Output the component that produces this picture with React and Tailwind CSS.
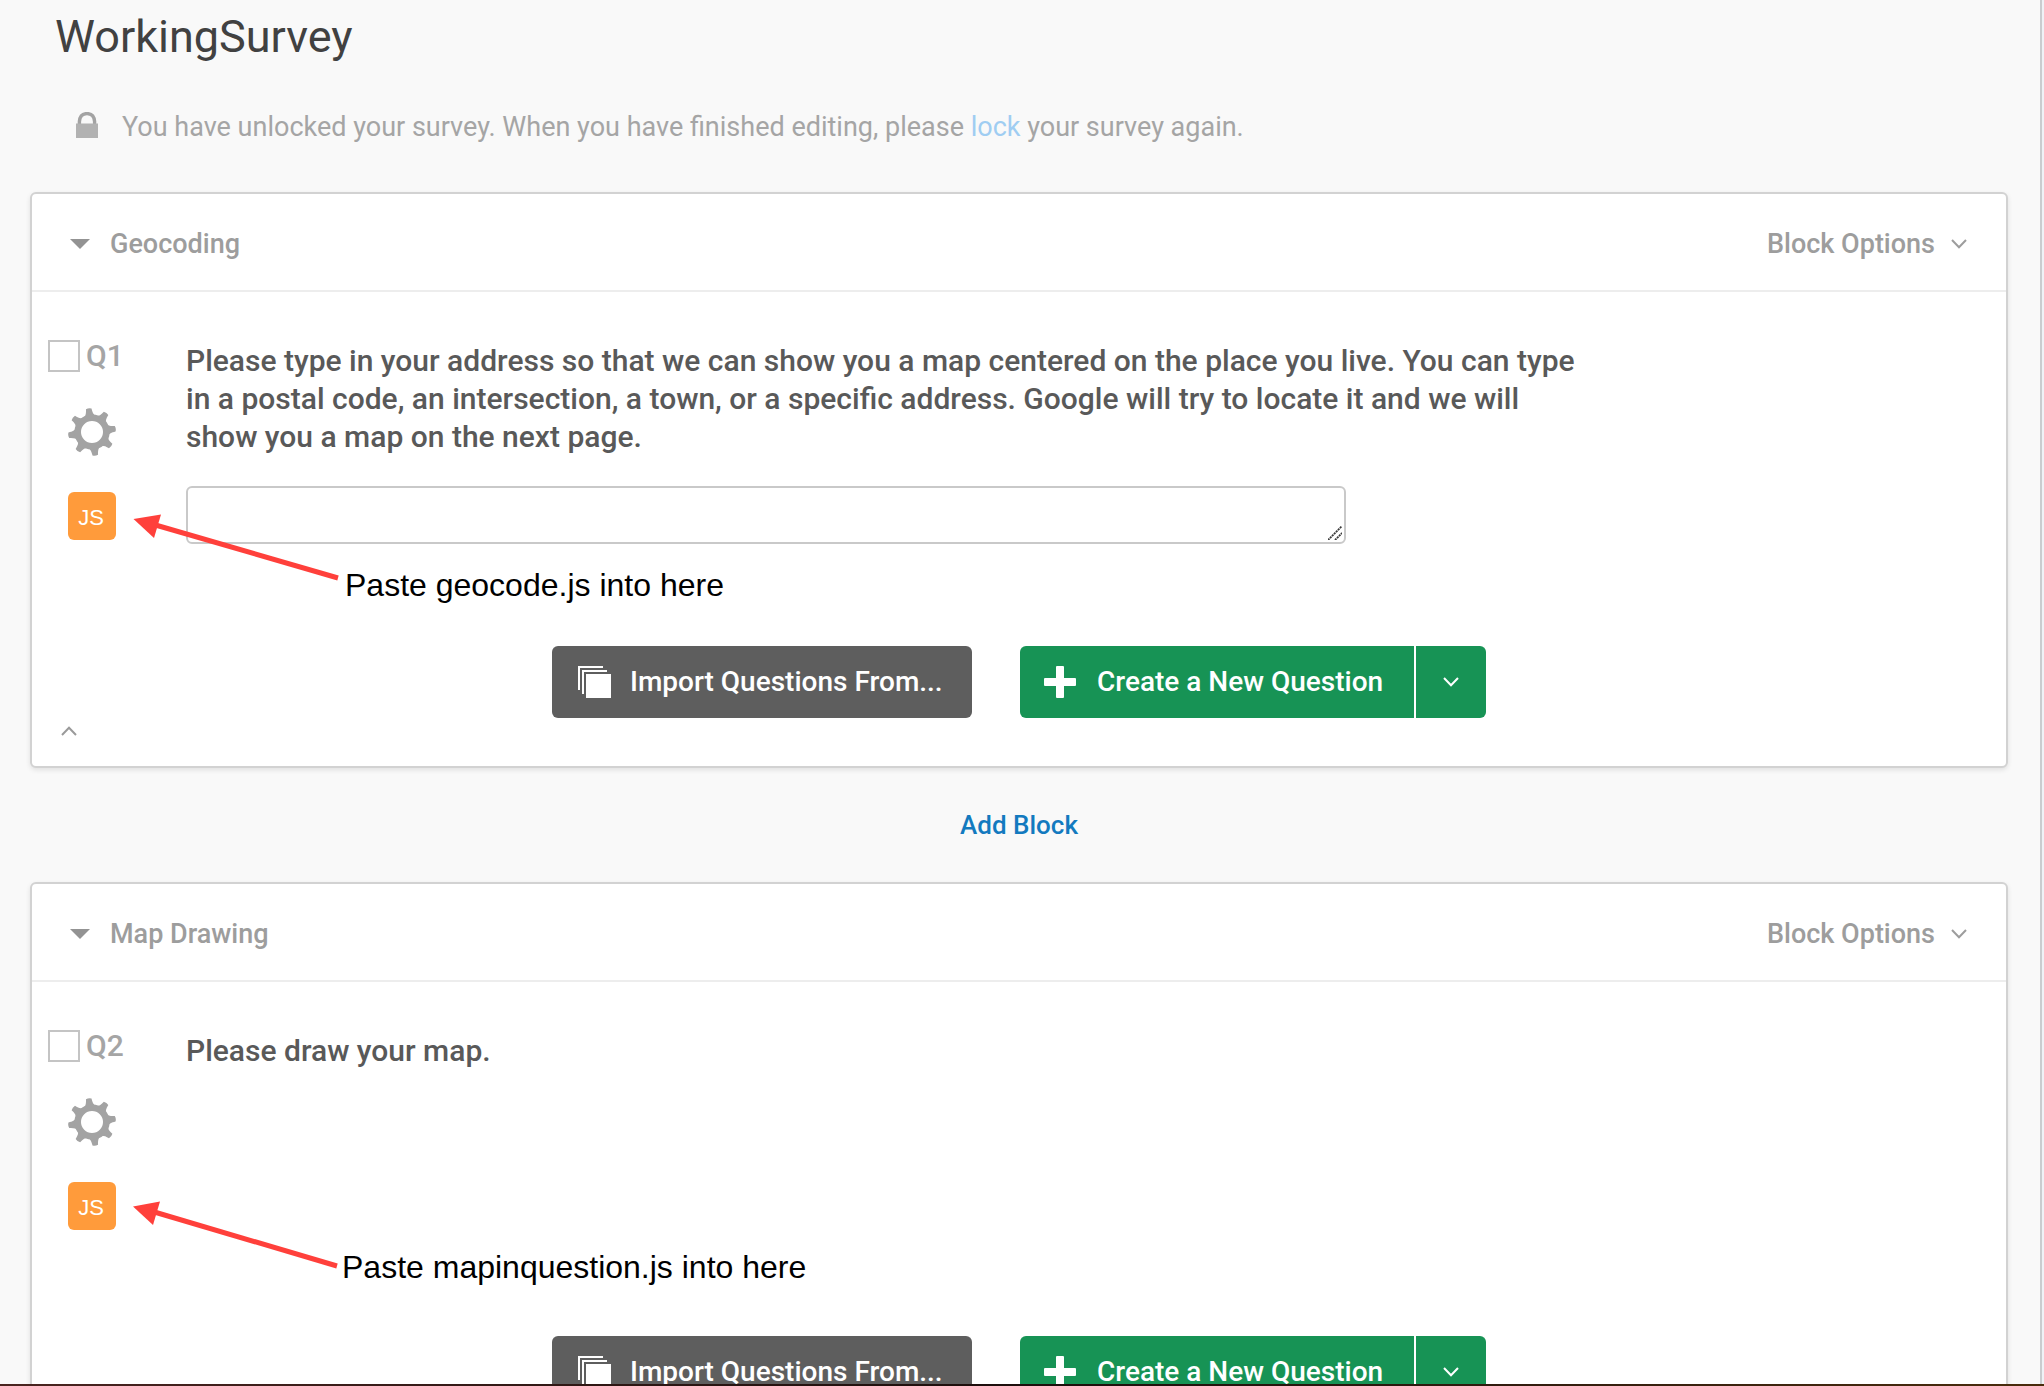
function Chevron({ up = false }) {
  return (
    <svg width="16" height="10" viewBox="0 0 16 10" fill="none" stroke="currentColor" strokeWidth="2" aria-hidden="true">
      <path d={up ? 'M1 9 8 1.8 15 9' : 'M1 1 8 8.2 15 1'} />
    </svg>
  );
}

function LockIcon() {
  return (
    <svg className="mb-1" width="22" height="26" viewBox="0 0 22 26" aria-hidden="true">
      <path d="M3.4 12V9.5C3.8 4.5 6.6 1.6 11 1.6s7.2 2.9 7.6 7.9V12" fill="none" stroke="#a3a3a3" strokeWidth="3.4" />
      <rect y="11.5" width="22" height="14.5" fill="#b2b2b2" />
    </svg>
  );
}

function GearIcon() {
  const teeth = [0, 45, 90, 135, 180, 225, 270, 315];
  return (
    <svg width="48" height="48" viewBox="-24 -24 48 48" aria-hidden="true">
      <g fill="#a3a3a3" transform="rotate(-8)">
        {teeth.map((a) => (
          <path key={a} d="M-6.6-14.5C-4-17-3.2-19-2.8-23.4Q0-24.6 2.8-23.4C3.2-19 4-17 6.6-14.5Z" transform={`rotate(${a})`} />
        ))}
      </g>
      <circle r="14.3" fill="none" stroke="#a3a3a3" strokeWidth="6.6" />
    </svg>
  );
}

function StackIcon() {
  return (
    <svg width="33" height="32" viewBox="0 0 33 32" aria-hidden="true">
      <path d="M1 24V1H25M5 28V5H29" fill="none" stroke="#ffffff" strokeWidth="2" />
      <rect x="8" y="8" width="25" height="24" fill="#ffffff" />
    </svg>
  );
}

function PlusIcon() {
  return (
    <svg width="33" height="32" viewBox="0 0 33 32" fill="#ffffff" aria-hidden="true">
      <rect x="12" width="8" height="32" rx="1" />
      <rect y="12" width="32" height="8" rx="1" />
    </svg>
  );
}

function ResizeGrip() {
  return (
    <svg className="pointer-events-none absolute right-1 bottom-1" width="14" height="14" viewBox="0 0 14 14" aria-hidden="true">
      <path d="M0 14 14 0M7 14 14 7" stroke="#3a3a3a" strokeWidth="1.8" strokeDasharray="2.1 0.7" />
    </svg>
  );
}

function Arrow({ head, from, to }) {
  return (
    <svg className="pointer-events-none absolute top-0 left-0" width="320" height="300" viewBox="0 0 320 300" aria-hidden="true">
      <line x1={from[0]} y1={from[1]} x2={to[0]} y2={to[1]} stroke="#ff403b" strokeWidth="5" />
      <polygon points={head} fill="#ff403b" />
    </svg>
  );
}

function Block({ title, id, question, hasAnswer = false, children }) {
  return (
    <section className="rounded-md border-2 border-[#d2d2d2] bg-white shadow-[0_2px_5px_rgba(0,0,0,0.1)]">
      <header className="flex h-[98px] items-center justify-between border-b-2 border-[#ededed] pt-1 pr-[39px] pl-[38px] text-[27px] leading-9 font-medium text-[#9d9d9d]">
        <button type="button" className="flex items-center gap-5">
          <svg width="20" height="10" viewBox="0 0 20 10" fill="#939393" aria-hidden="true">
            <path d="M0 0H20L10 10Z" />
          </svg>
          <h2>{title}</h2>
        </button>
        <button type="button" className="flex items-center gap-4">
          Block Options
          <Chevron />
        </button>
      </header>

      <div className="relative pt-12">
        <div className="flex min-h-[204px]">
          <div className="flex w-[154px] shrink-0 flex-col pl-4">
            <label className="flex h-8 items-center gap-1.5 text-[30px] leading-8 font-medium text-[#a5a5a5]">
              <input type="checkbox" className="size-8 appearance-none border-2 border-[#c4c4c4] bg-white" />
              {id}
            </label>
            <button type="button" aria-label={`${id} options`} className="mt-9 ml-5 size-12">
              <GearIcon />
            </button>
            <button type="button" className="mt-9 ml-5 size-12 rounded-md bg-[#ff9b3b] pt-1 pr-0.5 font-['Liberation_Sans',sans-serif] text-[22px] leading-8 text-white">
              JS
            </button>
          </div>
          <div className="min-w-0 flex-1 pt-0.5 pr-10">
            <p id={`${id}-text`} className="max-w-[1400px] text-[30px] leading-[38px] font-medium text-[#595959]">
              {question}
            </p>
            {hasAnswer && (
              <div className="relative mt-[30px] h-[58px] max-w-[1160px]">
                <textarea aria-labelledby={`${id}-text`} className="block size-full resize-none rounded-md border-2 border-[#c9c9c9] bg-white px-3 py-2 text-2xl" />
                <ResizeGrip />
              </div>
            )}
          </div>
        </div>

        <div className="mt-[102px] grid grid-cols-[1fr_auto_1fr] items-end">
          <button type="button" aria-label="Collapse block" className="mb-[30px] ml-[29px] justify-self-start text-[#9a9a9a]">
            <Chevron up />
          </button>
          <div className="mb-12 flex gap-12 text-[28px] leading-9 font-medium text-white">
            <button type="button" className="flex h-18 w-[420px] items-center gap-[19px] rounded-md bg-[#5e5e5e] pl-[26px] whitespace-nowrap">
              <StackIcon />
              Import Questions From...
            </button>
            <div className="flex h-18 gap-0.5">
              <button type="button" className="flex w-[394px] items-center gap-5 rounded-l-md bg-[#179355] pl-6 whitespace-nowrap">
                <PlusIcon />
                Create a New Question
              </button>
              <button type="button" aria-label="More question types" className="flex w-[70px] items-center justify-center rounded-r-md bg-[#179355]">
                <Chevron />
              </button>
            </div>
          </div>
        </div>
        {children}
      </div>
    </section>
  );
}

export default function App() {
  return (
    <div className="flex h-screen flex-col overflow-hidden bg-[#f9f9f9] font-[Roboto,sans-serif]">
      <div className="flex min-h-0 flex-1">
        <main className="min-w-0 flex-1 overflow-hidden pr-8 pl-[30px]">
          <h1 className="mt-[9px] ml-[25px] text-[45px] leading-[56px] text-[#414141]">WorkingSurvey</h1>
          <div className="mt-11 mb-[47px] ml-[46px] flex items-center gap-6 text-[27px] leading-9 text-[#a5a5a5]">
            <LockIcon />
            <p>
              You have unlocked your survey. When you have finished editing, please{' '}
              <a href="#lock" className="text-[#9fcdf2]">lock</a> your survey again.
            </p>
          </div>

          <Block
            title="Geocoding"
            id="Q1"
            question="Please type in your address so that we can show you a map centered on the place you live. You can type in a postal code, an intersection, a town, or a specific address. Google will try to locate it and we will show you a map on the next page."
            hasAnswer
          >
            <Arrow head="101.5,227 129,222.5 122,246" from={[120, 232]} to={[306, 286]} />
            <p className="absolute top-[273px] left-[313px] font-['Liberation_Sans',sans-serif] text-[32px] leading-10 whitespace-nowrap text-black">
              Paste geocode.js into here
            </p>
          </Block>

          <div className="flex h-[114px] items-center justify-center">
            <button type="button" className="text-[26px] leading-9 font-medium text-[#137abf]">Add Block</button>
          </div>

          <Block title="Map Drawing" id="Q2" question="Please draw your map.">
            <Arrow head="101,224.5 128,219.5 121,243" from={[119, 229]} to={[305, 284]} />
            <p className="absolute top-[265px] left-[310px] font-['Liberation_Sans',sans-serif] text-[32px] leading-10 whitespace-nowrap text-black">
              Paste mapinquestion.js into here
            </p>
          </Block>
        </main>
        <div className="w-1 border-l-2 border-[#c9cccf] bg-[#eff1f6]" />
      </div>
      <div className="h-0.5 bg-linear-to-r from-[#4a2420] via-[#1c0e0c] to-[#4a2c0c]" />
    </div>
  );
}
